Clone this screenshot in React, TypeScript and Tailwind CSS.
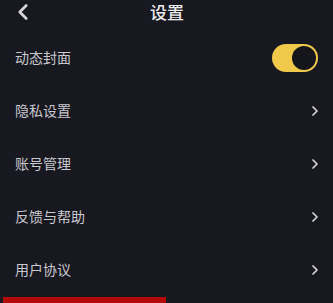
import React from 'react';
import { ChevronLeft, ChevronRight } from 'lucide-react';

const rows = ['隐私设置', '账号管理', '反馈与帮助', '用户协议'];

export default function App() {
  return (
    <div
      className="w-[333px] h-[303px] overflow-hidden bg-[#181820] flex flex-col"
      style={{ fontFamily: '"Noto Sans CJK SC", "Noto Sans", sans-serif' }}
    >
      {/* Header */}
      <div className="h-[31px] shrink-0 relative flex items-center justify-center">
        <ChevronLeft size={26} strokeWidth={2.4} className="absolute left-[10px] top-[-1px] text-[#d8d8dc]" />
        <span className="text-[17px] font-medium text-[#ececec] leading-none -mt-[9px] ml-[1px]">设置</span>
      </div>

      {/* Toggle row */}
      <div className="h-[53px] shrink-0 flex items-center justify-between pl-[15px] pr-[15px]">
        <span className="text-[14px] text-[#c9c9cf]">动态封面</span>
        <div className="w-[46px] h-[28px] rounded-full bg-[#f0c94a] flex items-center justify-end pr-[2px]">
          <div className="w-[24px] h-[24px] rounded-full bg-[#15151c]" />
        </div>
      </div>

      {rows.map((label) => (
        <div key={label} className="h-[53px] shrink-0 flex items-center justify-between pl-[15px] pr-[10px]">
          <span className="text-[14px] text-[#c9c9cf]">{label}</span>
          <ChevronRight size={16} strokeWidth={2.6} className="text-[#d6d6dc]" />
        </div>
      ))}

      {/* Bottom red indicator */}
      <div className="flex-1 flex items-end pl-[3px]">
        <div className="w-[163px] h-[6px] bg-[#b50a0a]" />
      </div>
    </div>
  );
}
